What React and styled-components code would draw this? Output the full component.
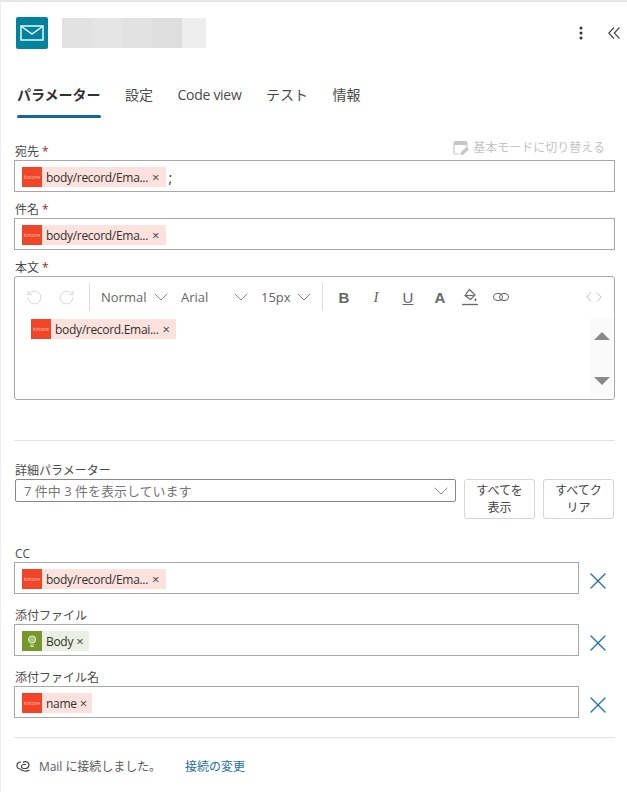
import React from 'react';
import styled, { createGlobalStyle } from 'styled-components';
import { RotateCcw, RotateCw, ChevronDown, X } from 'lucide-react';

const FONT = '"Open Sans", "Noto Sans CJK JP", sans-serif';

const GlobalStyle = createGlobalStyle`
  html, body {
    margin: 0;
    padding: 0;
    background: #fff;
  }
  body {
    font-family: ${FONT};
    color: #323130;
    overflow: hidden;
  }
`;

const Panel = styled.div`
  width: 627px;
  height: 792px;
  box-sizing: border-box;
  border-left: 1px solid #ececec;
  border-top: 2px solid #e6e6e6;
  padding: 15px 12px 0 13px;
  overflow: hidden;
`;

const Header = styled.div`
  display: flex;
  align-items: center;
  height: 32px;
  padding-left: 2px;
`;

const MailBadge = styled.div`
  width: 32px;
  height: 32px;
  border-radius: 2px;
  background: #03829c;
  display: flex;
  align-items: center;
  justify-content: center;
`;

const BlurredTitle = styled.div`
  width: 144px;
  height: 30px;
  margin-left: 14px;
  background: linear-gradient(
    90deg,
    #e2e2e2 0 30px,
    #e5e5e5 30px 60px,
    #e2e2e2 60px 90px,
    #dedede 90px 120px,
    #eeeeee 120px
  );
`;

const HeaderActions = styled.div`
  margin-left: auto;
  margin-right: -5px;
  display: flex;
  align-items: center;
  gap: 25px;
`;

const Tabs = styled.div`
  display: flex;
  gap: 24.5px;
  margin-top: 36px;
  padding-left: 3px;
`;

const Tab = styled.div`
  position: relative;
  font-size: 14px;
  line-height: 20px;
  height: 30px;
  color: #4a4a4a;
  letter-spacing: ${({ $latin }) => ($latin ? '-0.3px' : '0')};
  font-weight: ${({ $active }) => ($active ? 700 : 400)};
  ${({ $active }) => $active && `
    color: #323130;
    &::after {
      content: '';
      position: absolute;
      left: 0;
      right: 0;
      bottom: -3px;
      height: 3px;
      border-radius: 2px;
      background: #1465a8;
    }
  `}
`;

const LabelRow = styled.div`
  display: flex;
  align-items: flex-end;
  justify-content: space-between;
  height: 18px;
  margin-top: ${({ $top }) => $top || 8}px;
`;

const Label = styled.label`
  font-size: 12px;
  line-height: 16px;
  color: #4a4a4a;
  padding-left: 1px;
`;

const Required = styled.span`
  color: #a4262c;
  margin-left: 3px;
`;

const ModeSwitch = styled.div`
  display: flex;
  align-items: center;
  gap: 4px;
  font-size: 12px;
  line-height: 18px;
  color: #c4c4c4;
  padding-right: 10px;
  margin-bottom: 3px;
`;

const FieldRow = styled.div`
  display: flex;
  align-items: center;
  height: 32px;
`;

const InputBox = styled.div`
  box-sizing: border-box;
  width: ${({ $narrow }) => ($narrow ? '565px' : '601px')};
  height: 32px;
  border: 1px solid #a9a9a9;
  padding: 2px 7px 0;
  display: flex;
  align-items: center;
  font-size: 13px;
`;

const Chip = styled.span`
  display: inline-flex;
  align-items: center;
  height: 20px;
  font-size: 12px;
  color: #323130;
  background: ${({ $green }) => ($green ? '#e9f0e1' : '#fde1dd')};
`;

const ChipIcon = styled.span`
  width: 20px;
  height: 20px;
  flex: none;
  margin-right: 4px;
  background: ${({ $green }) => ($green ? '#75972b' : '#f04526')};
  color: #ffc9bd;
  font-size: 4.5px;
  display: flex;
  align-items: center;
  justify-content: center;
`;

const ChipText = styled.span`
  white-space: nowrap;
  letter-spacing: -0.3px;
`;

const ChipClose = styled.span`
  font-size: 13px;
  color: #444;
  margin-left: ${({ $tight }) => ($tight ? 3 : 4)}px;
  margin-right: ${({ $tight }) => ($tight ? 5 : 6)}px;
  line-height: 20px;
`;

const Semi = styled.span`
  margin-left: 3px;
  font-size: 14px;
`;

const RemoveButton = styled.button`
  border: 0;
  background: none;
  padding: 0;
  margin: 6px 0 0 5px;
  display: flex;
  color: #1d6fb0;
`;

const EditorBox = styled.div`
  position: relative;
  box-sizing: border-box;
  width: 601px;
  height: 124px;
  border: 1px solid #a9a9a9;
  border-radius: 3px;
`;

const EditorToolbar = styled.div`
  display: flex;
  align-items: center;
  height: 28px;
  margin-top: 6px;
  padding-left: 11px;
  color: #666;
`;

const ToolGroup = styled.div`
  display: flex;
  align-items: center;
  height: 100%;
  border-right: ${({ $sep }) => ($sep ? '1px solid #dddddd' : 'none')};
`;

const UndoSlot = styled.div`
  width: 31.5px;
  display: flex;
  color: #d4d4d4;
`;

const SelectTool = styled.div`
  display: flex;
  align-items: center;
  justify-content: space-between;
  width: ${({ $w }) => $w}px;
  margin-left: ${({ $ml }) => $ml}px;
  margin-right: ${({ $mr }) => $mr || 0}px;
  font-size: 13px;
  color: #666;
`;

const FormatTool = styled.span`
  width: ${({ $w }) => $w || 32}px;
  margin-left: ${({ $ml }) => $ml || 0}px;
  text-align: center;
  font-size: 15px;
  color: #666;
  display: flex;
  justify-content: center;
  font-family: ${({ $serif }) => ($serif ? '"Liberation Serif", serif' : '"Liberation Sans", sans-serif')};
  font-weight: ${({ $bold }) => ($bold ? 700 : 400)};
  font-style: ${({ $italic }) => ($italic ? 'italic' : 'normal')};
  text-decoration: ${({ $under }) => ($under ? 'underline' : 'none')};
`;

const CodeToggle = styled.div`
  margin-left: auto;
  margin-right: 12px;
  display: flex;
`;

const EditorBody = styled.div`
  display: flex;
  padding: 8px 16px;
`;

const ScrollTrack = styled.div`
  position: absolute;
  right: 0;
  bottom: 0;
  top: 41px;
  width: 24px;
  background: #fafafa;
  border-bottom-right-radius: 3px;
`;

const ScrollArrow = styled.span`
  position: absolute;
  left: 4px;
  width: 0;
  height: 0;
  border-left: 8px solid transparent;
  border-right: 8px solid transparent;
  ${({ $down }) => ($down
    ? 'top: 59px; border-top: 8px solid #8a8a8a;'
    : 'top: 14px; border-bottom: 8px solid #8a8a8a;')}
`;

const Divider = styled.hr`
  width: 601px;
  height: 1px;
  border: 0;
  margin: ${({ $top }) => $top}px 0 0;
  background: #e3e3e3;
`;

const FilterRow = styled.div`
  display: flex;
  align-items: flex-start;
  padding-left: 1px;
`;

const FilterSelect = styled.div`
  box-sizing: border-box;
  width: 441px;
  height: 23px;
  border: 1px solid #8a8886;
  border-radius: 2px;
  padding: 0 2px 0 8px;
  display: flex;
  align-items: center;
  justify-content: space-between;
  font-size: 13px;
  color: #777;
`;

const OutlineButton = styled.button`
  box-sizing: border-box;
  width: 71px;
  height: 40px;
  margin-left: ${({ $ml }) => $ml}px;
  padding: 0 8px;
  border: 1px solid #d5d5d5;
  border-radius: 3px;
  background: #fff;
  font-family: ${FONT};
  font-size: 12px;
  line-height: 17px;
  color: #444;
`;

const Footer = styled.div`
  display: flex;
  align-items: center;
  margin-top: 19px;
  padding-left: 2px;
  height: 18px;
  font-size: 12px;
  color: #5a5a5a;
`;

const FooterText = styled.span`
  margin-left: 7px;
  width: 146px;
  letter-spacing: -0.05px;
`;

const FooterLink = styled.a`
  color: #1d6fa8;
`;

const MailGlyph = () => (
  <svg width="24" height="16" viewBox="0 0 24 16" fill="none" stroke="#e8f6f9" strokeWidth="1.5">
    <rect x="1" y="1" width="22" height="14" />
    <path d="M1.5 1.5 12 9l10.5-7.500" />
  </svg>
);

const DotsGlyph = () => (
  <svg width="4" height="14" viewBox="0 0 4 14" fill="#333">
    <circle cx="2" cy="2" r="1.5" />
    <circle cx="2" cy="7" r="1.5" />
    <circle cx="2" cy="12" r="1.5" />
  </svg>
);

const CollapseGlyph = () => (
  <svg width="12" height="12" viewBox="0 0 12 12" fill="none" stroke="#444" strokeWidth="1.1">
    <path d="M6 .5.8 6 6 11.5M11.5.5 6.3 6l5.200 5.500" />
  </svg>
);

const ModeGlyph = () => (
  <svg width="16" height="16" viewBox="0 0 16 16" fill="none" stroke="#c6c6c6">
    <path d="M14 8V3a1.5 1.5 0 0 0-1.5-1.5h-10A1.5 1.5 0 0 0 1 3v9.500A1.500 1.500 0 0 0 2.500 14H6" strokeWidth="1.200" />
    <path d="M1.500 2.500h12v2h-12z" fill="#c6c6c6" />
    <path d="m8 14.500.5-2.500 5-4.500 1.800 1.800-4.800 4.700z" fill="#c6c6c6" />
  </svg>
);

const FillGlyph = () => (
  <svg width="16" height="18" viewBox="0 0 16 18" fill="none" stroke="#666" strokeWidth="1.200">
    <path d="m7.500 1.500 5.500 5.500-4.500 4.500L3 7.500z" />
    <path d="M3.500 7.500h8" />
    <path d="M13.500 10c.8 1 1 1.500 1 2a1 1 0 0 1-2 0c0-.5.2-1 1-2z" fill="#666" stroke="none" />
    <path d="M0 16.500h16" strokeWidth="1.300" />
  </svg>
);

const LinkGlyph = () => (
  <svg width="16" height="8" viewBox="0 0 16 8" fill="none" stroke="#666" strokeWidth="1">
    <rect x=".5" y=".5" width="9" height="7" rx="3.500" />
    <rect x="6.500" y=".5" width="9" height="7" rx="3.500" />
  </svg>
);

const CodeGlyph = () => (
  <svg width="16" height="10" viewBox="0 0 16 10" fill="none" stroke="#bcbcbc" strokeWidth="1">
    <path d="M5 .5.8 5 5 9.500M11 .5 15.200 5 11 9.500" />
  </svg>
);

const BulbGlyph = () => (
  <svg width="10" height="12" viewBox="0 0 10 12" fill="#a9c47d" stroke="#dde9c6" strokeWidth="1.100">
    <circle cx="5" cy="4.500" r="3.500" />
    <path d="M3 10h4M3.500 11.500h3" />
  </svg>
);

const ConnectionGlyph = () => (
  <svg width="16" height="14" viewBox="0 0 16 14" fill="none" stroke="#444" strokeWidth="1.200">
    <path d="M7 3.500a3.500 3.500 0 1 1 3 6H7.500a2 2 0 0 1 0-4H10" />
    <path d="M5 3H4.500a3.500 3.500 0 0 0 0 7c1 2 6 3 9 1" />
  </svg>
);

const ValueChip = ({ text, green, tight }) => (
  <Chip $green={green}>
    <ChipIcon $green={green}>{green ? <BulbGlyph /> : 'kintone'}</ChipIcon>
    <ChipText>{text}</ChipText>
    <ChipClose $tight={tight}>×</ChipClose>
  </Chip>
);

const Remove = () => (
  <RemoveButton type="button">
    <X size={28} strokeWidth={1.1} />
  </RemoveButton>
);

const App = () => (
  <>
    <GlobalStyle />
    <Panel>
      <Header>
        <MailBadge>
          <MailGlyph />
        </MailBadge>
        <BlurredTitle />
        <HeaderActions>
          <DotsGlyph />
          <CollapseGlyph />
        </HeaderActions>
      </Header>

      <Tabs>
        <Tab $active>パラメーター</Tab>
        <Tab>設定</Tab>
        <Tab $latin>Code view</Tab>
        <Tab>テスト</Tab>
        <Tab>情報</Tab>
      </Tabs>

      <LabelRow $top={27}>
        <Label>宛先<Required>*</Required></Label>
        <ModeSwitch>
          <ModeGlyph />
          基本モードに切り替える
        </ModeSwitch>
      </LabelRow>
      <InputBox>
        <ValueChip text="body/record/Ema..." />
        <Semi>;</Semi>
      </InputBox>

      <LabelRow>
        <Label>件名<Required>*</Required></Label>
      </LabelRow>
      <InputBox>
        <ValueChip text="body/record/Ema..." />
      </InputBox>

      <LabelRow>
        <Label>本文<Required>*</Required></Label>
      </LabelRow>
      <EditorBox>
        <EditorToolbar>
          <ToolGroup $sep>
            <UndoSlot><RotateCcw size={17} strokeWidth={1.3} /></UndoSlot>
            <UndoSlot><RotateCw size={17} strokeWidth={1.3} /></UndoSlot>
          </ToolGroup>
          <ToolGroup $sep>
            <SelectTool $w={72} $ml={11}>Normal<ChevronDown size={24} strokeWidth={1} color="#888" /></SelectTool>
            <SelectTool $w={72} $ml={8}>Arial<ChevronDown size={24} strokeWidth={1} color="#888" /></SelectTool>
            <SelectTool $w={55} $ml={8} $mr={6}>15px<ChevronDown size={24} strokeWidth={1} color="#888" /></SelectTool>
          </ToolGroup>
          <ToolGroup>
            <FormatTool $bold $ml={5}>B</FormatTool>
            <FormatTool $serif $italic>I</FormatTool>
            <FormatTool $under>U</FormatTool>
            <FormatTool $bold>A</FormatTool>
            <FormatTool $w={28}><FillGlyph /></FormatTool>
            <FormatTool $w={34}><LinkGlyph /></FormatTool>
          </ToolGroup>
          <CodeToggle>
            <CodeGlyph />
          </CodeToggle>
        </EditorToolbar>
        <EditorBody>
          <ValueChip text="body/record.Emai..." />
        </EditorBody>
        <ScrollTrack>
          <ScrollArrow />
          <ScrollArrow $down />
        </ScrollTrack>
      </EditorBox>

      <Divider $top={40} />

      <LabelRow $top={20}>
        <Label>詳細パラメーター</Label>
      </LabelRow>
      <FilterRow>
        <FilterSelect>
          7 件中 3 件を表示しています
          <ChevronDown size={24} strokeWidth={1} color="#888" />
        </FilterSelect>
        <OutlineButton $ml={8}>すべてを表示</OutlineButton>
        <OutlineButton $ml={8}>すべてクリア</OutlineButton>
      </FilterRow>

      <LabelRow $top={25}>
        <Label>CC</Label>
      </LabelRow>
      <FieldRow>
        <InputBox $narrow>
          <ValueChip text="body/record/Ema..." />
        </InputBox>
        <Remove />
      </FieldRow>

      <LabelRow $top={12}>
        <Label>添付ファイル</Label>
      </LabelRow>
      <FieldRow>
        <InputBox $narrow>
          <ValueChip green tight text="Body" />
        </InputBox>
        <Remove />
      </FieldRow>

      <LabelRow $top={12}>
        <Label>添付ファイル名</Label>
      </LabelRow>
      <FieldRow>
        <InputBox $narrow>
          <ValueChip tight text="name" />
        </InputBox>
        <Remove />
      </FieldRow>

      <Divider $top={19} />

      <Footer>
        <ConnectionGlyph />
        <FooterText>Mail に接続しました。</FooterText>
        <FooterLink>接続の変更</FooterLink>
      </Footer>
    </Panel>
  </>
);

export default App;
